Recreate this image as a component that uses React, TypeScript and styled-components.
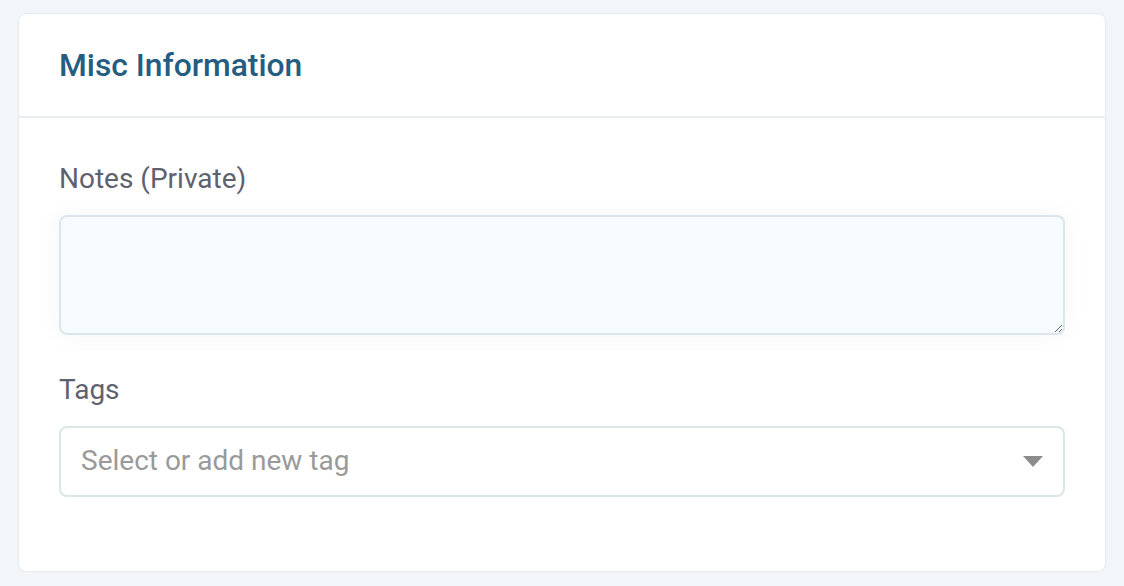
import React from "react";
import styled, { createGlobalStyle } from "styled-components";

const GlobalStyle = createGlobalStyle`
  html, body {
    margin: 0;
    padding: 0;
    background: #f2f6f9;
    font-family: Roboto, "Liberation Sans", Arial, sans-serif;
  }
  * { box-sizing: border-box; }
`;

const Page = styled.div`
  padding: 13px 18px 15px 18px;
  min-height: 586px;
`;

const Card = styled.section`
  background: #ffffff;
  border: 1px solid #e4eaee;
  border-radius: 8px;
  height: 559px;
  display: flex;
  flex-direction: column;
`;

const Header = styled.header`
  height: 104px;
  padding: 0 40px;
  display: flex;
  align-items: center;
  border-bottom: 2px solid #e8eef2;
`;

const Title = styled.h2`
  margin: 0;
  font-size: 31.8px;
  font-weight: 500;
  color: #255d81;
`;

const Body = styled.div`
  padding: 45px 40px 0 40px;
  display: flex;
  flex-direction: column;
`;

const Field = styled.div<{ $gap?: number }>`
  display: flex;
  flex-direction: column;
  margin-bottom: ${(p) => p.$gap ?? 0}px;
`;

const Label = styled.label`
  font-size: 28px;
  line-height: 32px;
  color: #5e626e;
  margin-bottom: 20px;
`;

const TextArea = styled.textarea`
  height: 120px;
  width: 100%;
  background: #f7fbfe;
  border: 2px solid #dbe6e9;
  border-radius: 8px;
  box-shadow: 0 0 22px rgba(30, 50, 70, 0.05);
  font-family: inherit;
  font-size: 22px;
  padding: 12px 18px;
  resize: vertical;
  outline: none;
`;

const SelectBox = styled.div`
  height: 71px;
  border: 2px solid #dbe6e9;
  border-radius: 8px;
  background: #ffffff;
  display: flex;
  align-items: center;
  justify-content: space-between;
  padding: 0 20px 2px 20px;
`;

const Placeholder = styled.span`
  font-size: 28px;
  color: #9a9a9a;
`;

const Caret = styled.svg`
  width: 20px;
  height: 11px;
  flex-shrink: 0;
  margin-top: 2px;
`;

export default function App() {
  return (
    <>
      <GlobalStyle />
      <Page>
        <Card>
          <Header>
            <Title>Misc Information</Title>
          </Header>
          <Body>
            <Field $gap={39}>
              <Label>Notes (Private)</Label>
              <TextArea />
            </Field>
            <Field>
              <Label>Tags</Label>
              <SelectBox>
                <Placeholder>Select or add new tag</Placeholder>
                <Caret viewBox="0 0 20 11">
                  <polygon points="0,0 20,0 10,11" fill="#8c8c8c" />
                </Caret>
              </SelectBox>
            </Field>
          </Body>
        </Card>
      </Page>
    </>
  );
}
